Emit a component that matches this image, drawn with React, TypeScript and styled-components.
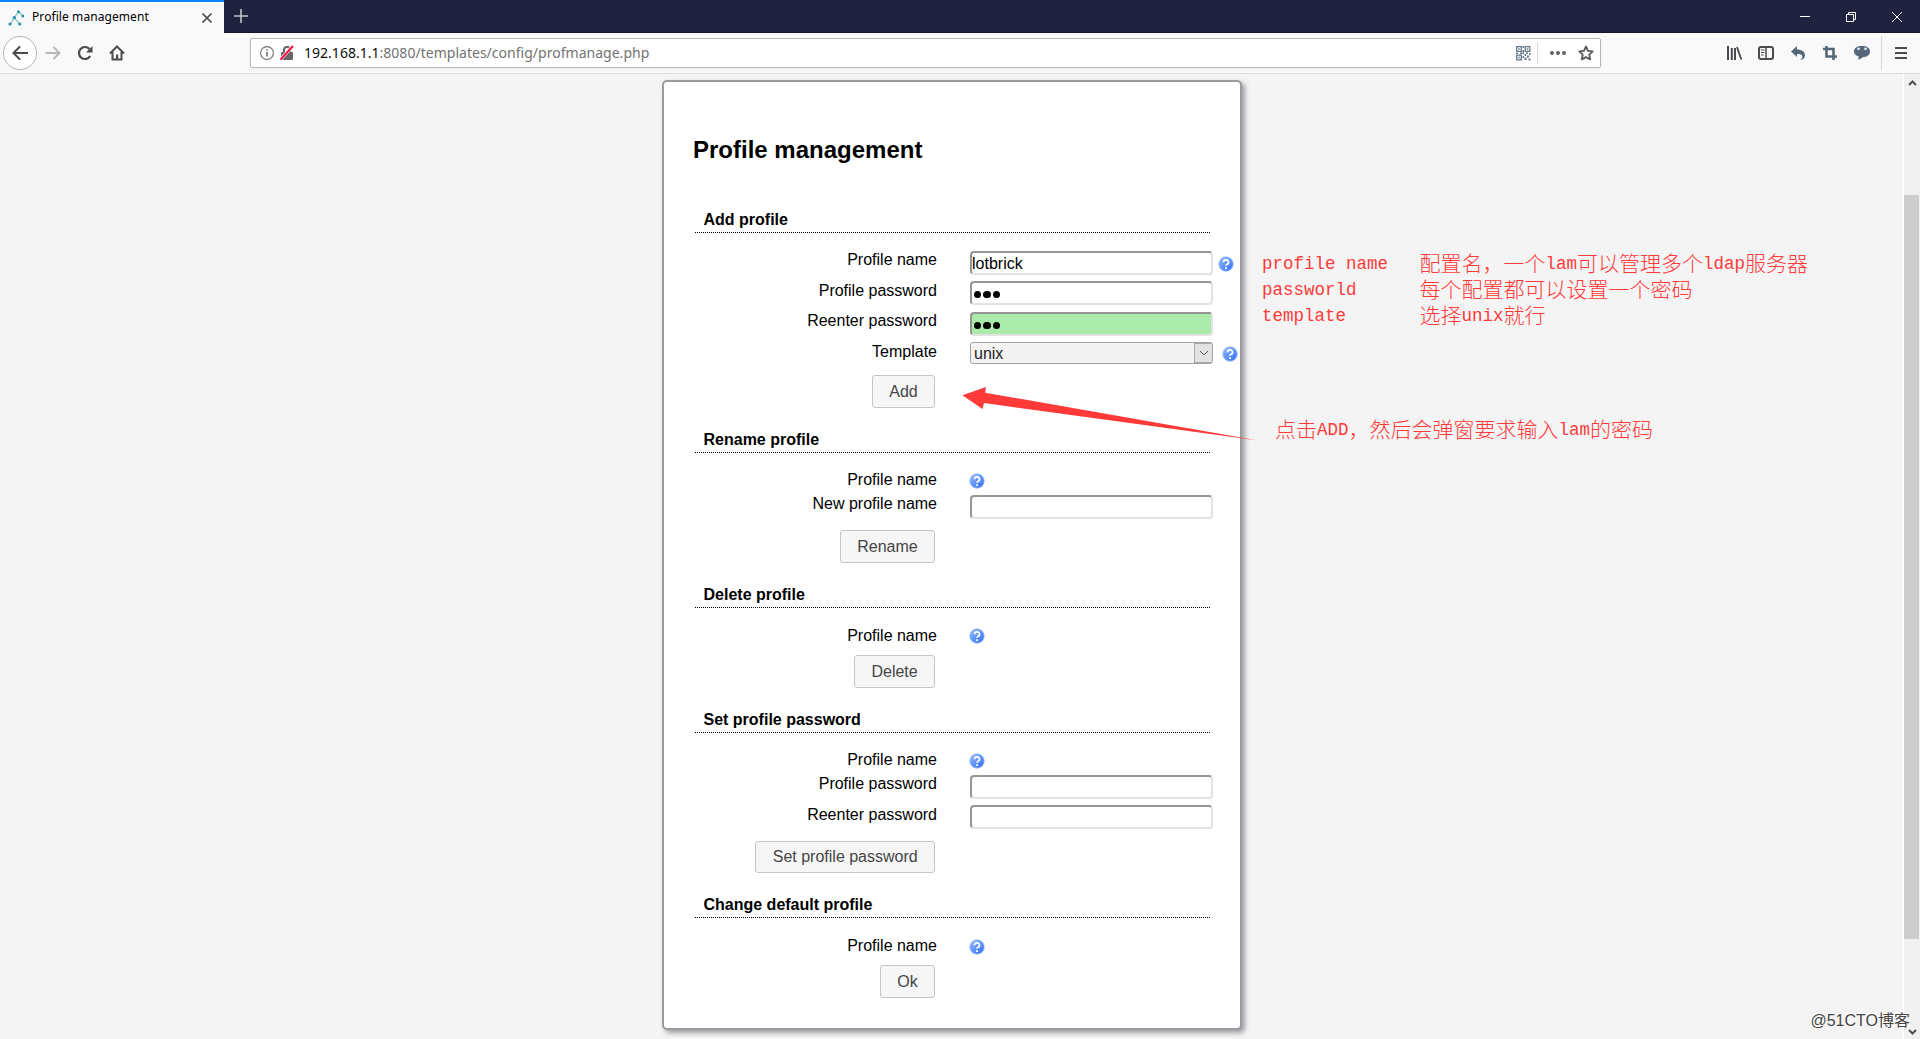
import React from 'react';
import styled, { createGlobalStyle } from 'styled-components';

const Global = createGlobalStyle`
  * { box-sizing: border-box; }
  body { margin: 0; overflow: hidden; background: #f4f4f4; font-family: "Liberation Sans", Arial, sans-serif; font-size: 16px; color: #000; }
`;

const Window = styled.div`
  display: flex; flex-direction: column; width: 1920px; height: 1039px; position: relative; overflow: hidden;
`;
const TitleBar = styled.header`
  display: flex; justify-content: space-between; height: 33px; flex: none; background: #202340; border-bottom: 1px solid #15172e;
`;
const TabStrip = styled.div`display: flex; height: 33px;`;
const Tab = styled.div`
  display: flex; align-items: center; width: 224px; height: 33px; padding: 0 10px 0 8px;
  background: #f9f9fa; border-top: 2px solid #0a84ff; font: 12px/16px "Noto Sans", sans-serif;
  svg { flex: none; }
`;
const TabTitle = styled.span`flex: 1; margin-left: 7px; padding-bottom: 2px; white-space: nowrap; letter-spacing: 0.08px;`;
const NewTab = styled.div`display: flex; align-items: center; padding: 0 0 1px 10px;`;
const Controls = styled.div`display: flex; width: 138px; svg { flex: 1; height: 33px; }`;
const NavBar = styled.nav`
  display: flex; align-items: center; height: 41px; flex: none; background: #f9f9fa; border-bottom: 1px solid #dedede; padding-left: 3px;
  svg { flex: none; }
`;
const NavButtons = styled.div`display: flex; align-items: center; width: 247px;`;
const BackButton = styled.div`
  display: grid; place-items: center; width: 34px; height: 34px; border: 1px solid #b4b4b5; border-radius: 50%; background: #fff; margin-right: 8px;
`;
const Spacer = styled.span<{ $w: number }>`flex: none; width: ${p => p.$w}px;`;
const UrlBar = styled.div`
  display: flex; align-items: center; width: 1351px; height: 30px; padding-left: 9px; background: #fff; border: 1px solid #b8b8b9; border-radius: 2px;
  box-shadow: 0 1px 3px rgba(0,0,0,.06);
`;
const Url = styled.span`flex: 1; margin-left: 10px; font: 14px/20px "Noto Sans", sans-serif; letter-spacing: 0.02px; color: #737373; white-space: nowrap; b { color: #0c0c0d; font-weight: 400; }`;
const Divider = styled.span<{ $h: number }>`flex: none; width: 1px; height: ${p => p.$h}px; background: #d7d7db;`;
const Tools = styled.div`display: flex; align-items: center; margin: 0 11px 0 125px; gap: 16px;`;

const Page = styled.main`display: flex; flex: 1; min-height: 0;`;
const Body = styled.div`flex: 1; padding: 6px 0 0 662px;`;
const Card = styled.section`
  width: 580px; height: 950px; padding: 54px 0 0 31px; background: #fff; border: 2px solid #9b9b9f; border-radius: 5px;
  box-shadow: 3px 3px 5px rgba(110,110,120,.65);
`;
const Title = styled.h1`margin: 0 0 0 -2px; font-size: 24px; line-height: 28px;`;
const Section = styled.div<{ $top: number }>`padding-top: ${p => p.$top}px;`;
const Legend = styled.h2<{ $gap: number }>`
  width: 515px; height: 23px; margin: 0 0 ${p => p.$gap}px; padding-left: 8.5px; font-size: 16px; line-height: 20px; border-bottom: 1px dotted #000;
`;
const Row = styled.div<{ $h: number }>`display: grid; grid-template-columns: 242px 1fr; column-gap: 33px; height: ${p => p.$h}px;`;
const Label = styled.label`text-align: right; line-height: 20px;`;
const Field = styled.div<{ $top: number }>`display: flex; align-items: flex-start; padding-top: ${p => p.$top}px;`;
const Input = styled.input<{ $ok?: boolean }>`
  width: 243px; height: 24px; margin: 0; padding: 2px 0 0; border: 2px solid; border-color: #959595 #e3e3e3 #e3e3e3 #959595; border-radius: 4px;
  background: ${p => (p.$ok ? '#aaebaa' : '#fff')}; font: 16px "Liberation Sans", Arial, sans-serif; color: #000; outline: none;
`;
const Masked = styled(Input).attrs({ as: 'div' })`
  display: flex; align-items: center; gap: 1.8px; padding: 3px 1.500px 0;
`;
const Dot = styled.i`width: 7.8px; height: 7.8px; border-radius: 50%; background: #000;`;
const Select = styled.div`
  display: flex; width: 243px; height: 22px; border: 1px solid #a2a2a2; border-radius: 3px; background: #f3f3f3; padding-left: 3px; line-height: 21px; color: #222;
`;
const SelectArrow = styled.span`
  display: grid; place-items: center; width: 18px; height: 20px; margin-left: auto; background: #e2e2e2; border: 1px solid #a8a8a8; border-width: 1px 0 1px 1px;
`;
const HelpBox = styled.span<{ $left: number; $top: number }>`margin: ${p => p.$top}px 0 0 ${p => p.$left}px; svg { display: block; }`;
const Actions = styled.div<{ $top: number; $h?: number }>`
  display: flex; justify-content: flex-end; width: 240px; height: ${p => (p.$h || 33) + p.$top}px; padding-top: ${p => p.$top}px;
`;
const Button = styled.button`
  padding: 0 16.300px; border: 1px solid #c5c5c5; border-radius: 3px; background: #f6f6f6; color: #454545; font: 16px "Liberation Sans", Arial, sans-serif;
`;
const Scrollbar = styled.div`
  display: flex; flex-direction: column; align-items: center; width: 17px; background: #f0f0f0; border-left: 1px solid #fff; padding: 5px 0 3px;
`;
const Thumb = styled.div`width: 15px; height: 744px; margin: 108px 1px auto 0; background: #cdcdcd;`;

const Note = styled.div<{ $x: number; $y: number }>`
  position: absolute; left: ${p => p.$x}px; top: ${p => p.$y}px; color: #ff3a38; white-space: pre;
  font: 300 21px/26px "Noto Sans CJK SC", sans-serif;
`;
const NoteLine = styled.div`display: flex; height: 26px;`;
const Latin = styled.span`padding-top: 1px; height: 26px; font: 17.500px/26px "Liberation Mono", monospace;`;
const Cjk = styled.span`margin-top: -1px;`;
const Arrow = styled.svg`position: absolute; left: 960px; top: 380px;`;
const Watermark = styled.div`
  position: absolute; right: 10px; top: 1010px; font: 16px/22px "Liberation Sans", "Noto Sans CJK SC", sans-serif; color: #444; text-shadow: -1px -1px 0 #fff;
`;

const Help = ({ left = -1, top = 0 }: { left?: number; top?: number }) => (
  <HelpBox $left={left} $top={top}>
    <svg width="16" height="16" viewBox="0 0 16 16">
      <defs>
        <linearGradient id="hg" x1="0" y1="0" x2="1" y2="1"><stop offset="0" stopColor="#94bdff" /><stop offset="1" stopColor="#2f6cf5" /></linearGradient>
      </defs>
      <circle cx="8" cy="8" r="7.3" fill="url(#hg)" stroke="#a9c4f8" strokeWidth=".8" />
      <path d="M5.5 6.2a2.5 2.3 0 1 1 3.6 2.1c-.8.4-1.1.8-1.1 1.5M8 11.3v1.7" fill="none" stroke="#fff" strokeWidth="1.8" />
    </svg>
  </HelpBox>
);

const Password = ({ ok }: { ok?: boolean }) => <Masked $ok={ok}><Dot /><Dot /><Dot /></Masked>;

const ink = '#4a4a4f';
const slate = '#55687a';

export default function App() {
  return (
    <>
      <Global />
      <Window>
        <TitleBar>
          <TabStrip>
            <Tab>
              <svg width="17" height="16" viewBox="0 0 17 16"><path d="M10.500 1.500 6.300 7.800 2.500 14M6.300 7.800l5.200 6M10.500 1.500l4.200 4.300" fill="none" stroke="#7fb9c6" strokeWidth="1.100" /><g fill="#2a94a8"><circle cx="10.500" cy="1.700" r="1.500" /><circle cx="6.300" cy="7.600" r="1.700" /><circle cx="2" cy="14" r="1.600" /><circle cx="11.700" cy="14" r="1.600" /><circle cx="14.800" cy="6" r="1.500" /></g></svg>
              <TabTitle>Profile management</TabTitle>
              <svg width="14" height="14" viewBox="0 0 14 14"><path d="m2.500 2.500 9 9m0-9-9 9" stroke={ink} strokeWidth="1.700" /></svg>
            </Tab>
            <NewTab><svg width="14" height="14" viewBox="0 0 14 14"><path d="M7 0v14M0 7h14" stroke="#c3c4cc" strokeWidth="1.600" /></svg></NewTab>
          </TabStrip>
          <Controls>
            <svg viewBox="0 0 46 33"><path d="M18 16.500h10" stroke="#fff" /></svg>
            <svg viewBox="0 0 46 33"><path d="M18.500 14.500h7v7h-7zM20.500 14v-1.500h7v7H26" fill="none" stroke="#fff" /></svg>
            <svg viewBox="0 0 46 33"><path d="m18 12 10 10m0-10L18 22" stroke="#fff" /></svg>
          </Controls>
        </TitleBar>
        <NavBar>
          <NavButtons>
            <BackButton><svg width="16" height="16" viewBox="0 0 16 16"><path d="M15.500 8H2M7.500 2 1.500 8l6 6" fill="none" stroke={ink} strokeWidth="2" strokeLinecap="round" /></svg></BackButton>
            <svg width="16" height="16" viewBox="0 0 16 16"><path d="M.5 8H14M8.500 2l6 6-6 6" fill="none" stroke="#b8b8ba" strokeWidth="2" /></svg>
            <Spacer $w={16} />
            <svg width="16" height="16" viewBox="0 0 16 16"><path d="M13.200 11A6 6 0 1 1 12.500 4" fill="none" stroke={ink} strokeWidth="2.200" /><path d="M15.500 1v6.500H9z" fill={ink} /></svg>
            <Spacer $w={16} />
            <svg width="16" height="16" viewBox="0 0 16 16"><path d="m1 8.500 7-7 7 7M3.500 7v7.500h9V7" fill="none" stroke={ink} strokeWidth="2" /><path d="M7 9.500h2.200V14H7z" fill={ink} /></svg>
          </NavButtons>
          <UrlBar>
            <svg width="14" height="14" viewBox="0 0 14 14"><circle cx="7" cy="7" r="6.400" fill="none" stroke="#737373" strokeWidth="1.100" /><path d="M7 6v4.500M7 3.300v1.500" stroke="#737373" strokeWidth="1.600" /></svg>
            <Spacer $w={6} />
            <svg width="14" height="16" viewBox="0 0 14 16"><path d="M4 8V5a3 3 0 0 1 6 0v3" fill="none" stroke="#66666a" strokeWidth="2" /><rect x="1" y="7" width="12" height="8" rx="1" fill="#66666a" /><path d="M.5 14.500 13 1" stroke="#fff" strokeWidth="3.200" /><path d="M.5 14.500 13 1" stroke="#ff0039" strokeWidth="1.900" /></svg>
            <Url><b>192.168.1.1</b>:8080/templates/config/profmanage.php</Url>
            <svg width="15" height="15" viewBox="0 0 15 15"><g fill="none" stroke="#66788a" strokeWidth="1.300"><path d="M.7.7h4.600v4.600H.7zM9.200.7h4.600v4.600H9.200zM.7 9.200h4.600v4.600H.7z" /></g><path fill="#66788a" d="M2.300 2.300h1.500v1.500H2.300zM10.800 2.300h1.500v1.500h-1.500zM2.300 10.800h1.500v1.500H2.300zM6.500 0h1.500v2H6.500zM6.500 4h1.500v4H6.500zM0 6.500h2V8H0zM4 6.500h2V8H4zM8.500 8H10v2H8.500zM10 6.500h2V8h-2zM13 7h1.500v2H13zM11 9.500h2v2h-2zM8.500 11.500h2V14h-2zM6.500 10H8v2H6.500zM12.500 12.500h2v2h-2z" /></svg>
            <Spacer $w={6} /><Divider $h={22} /><Spacer $w={12} />
            <svg width="16" height="4" viewBox="0 0 16 4"><g fill="#606064"><circle cx="2" cy="2" r="2" /><circle cx="8" cy="2" r="2" /><circle cx="14" cy="2" r="2" /></g></svg>
            <Spacer $w={12} />
            <svg width="16" height="16" viewBox="0 0 16 16"><path d="m8 1.500 2 4.300 4.700.6-3.400 3.300.9 4.700L8 12.100l-4.200 2.300.9-4.700L1.300 6.400 6 5.800z" fill="none" stroke="#5a5a5e" strokeWidth="1.800" strokeLinejoin="round" /></svg>
            <Spacer $w={6} />
          </UrlBar>
          <Tools>
            <svg width="16" height="16" viewBox="0 0 16 16"><path d="M2 1v14M5.800 3v12M9 3v12" stroke={ink} strokeWidth="2" /><path d="m11 2 4.300 12.500" stroke={ink} strokeWidth="1.800" /></svg>
            <svg width="16" height="16" viewBox="0 0 16 16"><rect x="1" y="2" width="14" height="12" rx="2" fill="none" stroke={ink} strokeWidth="2" /><path d="M8 2v12" stroke={ink} strokeWidth="1.500" /><path d="M3 5h3.500M3 7.500h3.500M3 10h2.500" stroke={ink} /></svg>
            <svg width="16" height="16" viewBox="0 0 16 16"><path d="M7 1v3.500c5 0 8 2.200 8 6 0 2.300-1.700 4.200-5 4.500 2-1.300 2.800-2.500 2.300-4C11.800 9.500 10 9 7 9v3L1 6.500z" fill={slate} /></svg>
            <svg width="16" height="16" viewBox="0 0 16 16"><path d="M4.500 1v10.500H15M1 4h10.500v11" fill="none" stroke={slate} strokeWidth="2.600" /></svg>
            <svg width="16" height="16" viewBox="0 0 16 16"><path d="M8 1c5 0 8 2 8 5.500S13 12 9 12c-1.500 1.500-3 2.400-5.500 2.500C4.500 13.500 4.700 12.700 4.500 11.400 1.500 10.500 0 8.800 0 6.500 0 3 3 1 8 1z" fill={slate} /><circle cx="4.500" cy="3.800" r="1.400" fill="#dfe4e8" /><circle cx="11.500" cy="3.800" r="1.400" fill="#dfe4e8" /></svg>
          </Tools>
          <Divider $h={34} />
          <Spacer $w={13} />
          <svg width="12" height="12" viewBox="0 0 12 12"><path d="M0 1h12M0 6h12M0 11h12" stroke={ink} strokeWidth="2" /></svg>
        </NavBar>
        <Page>
          <Body>
            <Card>
              <Title>Profile management</Title>
              <Section $top={46}>
                <Legend $gap={17}>Add profile</Legend>
                <Row $h={31}><Label>Profile name</Label><Field $top={1}><Input defaultValue="lotbrick" /><Help left={5} top={5} /></Field></Row>
                <Row $h={30}><Label>Profile password</Label><Field $top={0}><Password /></Field></Row>
                <Row $h={31}><Label>Reenter password</Label><Field $top={1}><Password ok /></Field></Row>
                <Row $h={27}>
                  <Label>Template</Label>
                  <Field $top={0}>
                    <Select>unix<SelectArrow><svg width="10" height="6" viewBox="0 0 10 6"><path d="m1 1 4 4 4-4" fill="none" stroke="#555" /></svg></SelectArrow></Select>
                    <Help left={9} top={4} />
                  </Field>
                </Row>
                <Actions $top={6}><Button>Add</Button></Actions>
              </Section>
              <Section $top={22}>
                <Legend $gap={17}>Rename profile</Legend>
                <Row $h={24}><Label>Profile name</Label><Field $top={3}><Help /></Field></Row>
                <Row $h={30}><Label>New profile name</Label><Field $top={1}><Input /></Field></Row>
                <Actions $top={6}><Button>Rename</Button></Actions>
              </Section>
              <Section $top={22}>
                <Legend $gap={18}>Delete profile</Legend>
                <Row $h={24}><Label>Profile name</Label><Field $top={2}><Help /></Field></Row>
                <Actions $top={5}><Button>Delete</Button></Actions>
              </Section>
              <Section $top={22}>
                <Legend $gap={17}>Set profile password</Legend>
                <Row $h={24}><Label>Profile name</Label><Field $top={3}><Help /></Field></Row>
                <Row $h={31}><Label>Profile password</Label><Field $top={1}><Input /></Field></Row>
                <Row $h={30}><Label>Reenter password</Label><Field $top={0}><Input /></Field></Row>
                <Actions $top={6} $h={32}><Button>Set profile password</Button></Actions>
              </Section>
              <Section $top={22}>
                <Legend $gap={18}>Change default profile</Legend>
                <Row $h={24}><Label>Profile name</Label><Field $top={3}><Help /></Field></Row>
                <Actions $top={5}><Button>Ok</Button></Actions>
              </Section>
            </Card>
          </Body>
          <Scrollbar>
            <svg width="9" height="8" viewBox="0 0 9 8"><path d="m1 6 3.500-3.500L8 6" fill="none" stroke="#505050" strokeWidth="2" /></svg>
            <Thumb />
            <svg width="9" height="8" viewBox="0 0 9 8"><path d="m1 2 3.500 3.500L8 2" fill="none" stroke="#505050" strokeWidth="2" /></svg>
          </Scrollbar>
        </Page>
        <Note $x={1262} $y={250}>
          <NoteLine><Latin>{'profile name   '}</Latin><Cjk>配置名，一个</Cjk><Latin>lam</Latin><Cjk>可以管理多个</Cjk><Latin>ldap</Latin><Cjk>服务器</Cjk></NoteLine>
          <NoteLine><Latin>{'passworld      '}</Latin><Cjk>每个配置都可以设置一个密码</Cjk></NoteLine>
          <NoteLine><Latin>{'template       '}</Latin><Cjk>选择</Cjk><Latin>unix</Latin><Cjk>就行</Cjk></NoteLine>
        </Note>
        <Note $x={1275} $y={416}>
          <NoteLine><Cjk>点击</Cjk><Latin>ADD</Latin><Cjk>，然后会弹窗要求输入</Cjk><Latin>lam</Latin><Cjk>的密码</Cjk></NoteLine>
        </Note>
        <Arrow width="300" height="64" viewBox="960 380 300 64"><path d="M962.400 395.300 986 387l-.8 5.700L1258 440.600 984 403l-1.500 6z" fill="#ff3a38" /></Arrow>
        <Watermark>@51CTO博客</Watermark>
      </Window>
    </>
  );
}
